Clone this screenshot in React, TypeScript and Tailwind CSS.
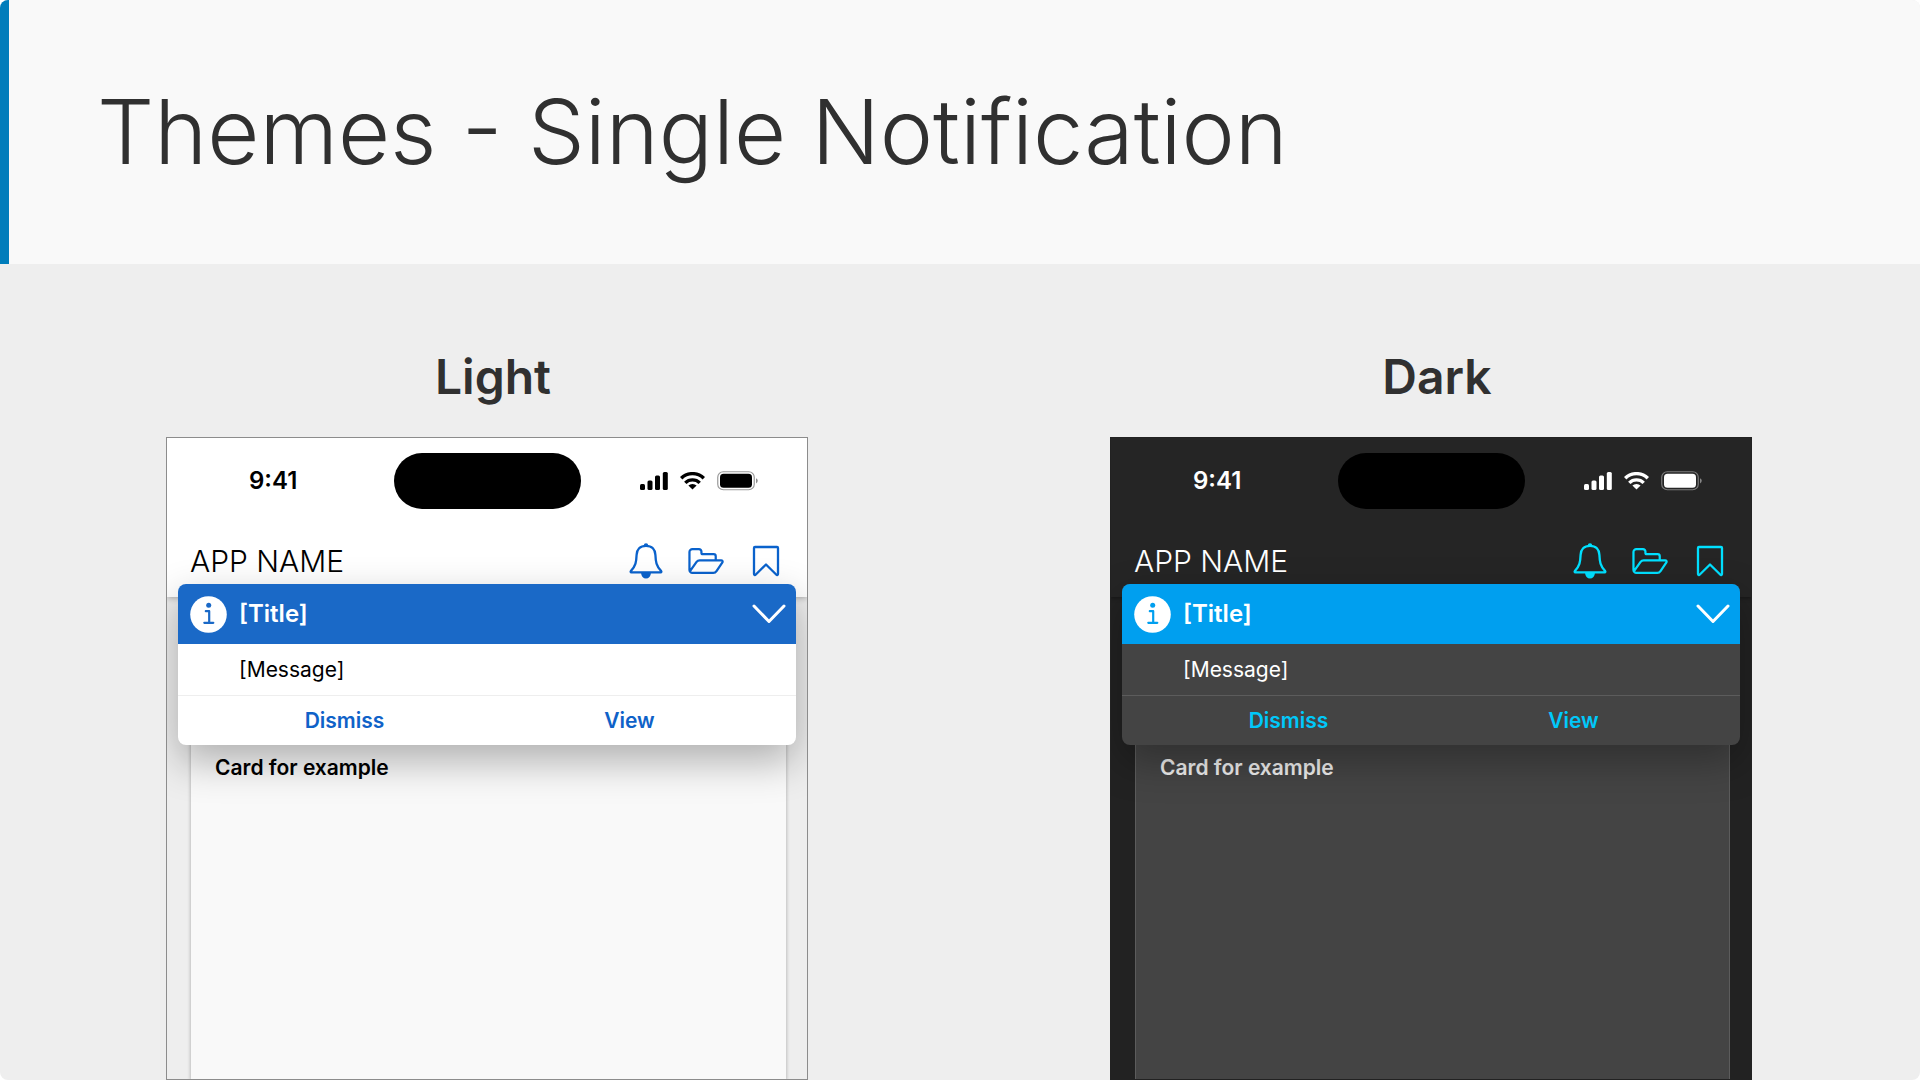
import clsx from 'clsx'

interface IconProps {
  className?: string
}

function SignalIcon({ className }: IconProps) {
  return (
    <svg className={className} viewBox="0 0 28 18" fill="currentColor" aria-hidden="true">
      <rect x="0" y="12" width="5" height="6" rx="1.5" />
      <rect x="7.5" y="8.5" width="5" height="9.5" rx="1.5" />
      <rect x="15" y="3.5" width="5" height="14.5" rx="1.5" />
      <rect x="22.8" y="0" width="5" height="18" rx="1.5" />
    </svg>
  )
}

function WifiIcon({ className }: IconProps) {
  return (
    <svg className={className} viewBox="0 0 25 18" aria-hidden="true">
      <g fill="none" stroke="currentColor" strokeWidth="3.4">
        <path d="M1.2 6.3a16 16 0 0 1 22.6 0" />
        <path d="M5.3 10.9a10.2 10.2 0 0 1 14.4 0" />
      </g>
      <path d="M12.5 17.6 8.4 13.6a5.8 5.8 0 0 1 8.2 0Z" fill="currentColor" />
    </svg>
  )
}

function BatteryIcon({ className }: IconProps) {
  return (
    <svg className={className} viewBox="0 0 42 20" aria-hidden="true">
      <rect x="0.75" y="0.75" width="36.5" height="18" rx="5.5" fill="none" stroke="currentColor" strokeOpacity="0.4" strokeWidth="1.2" />
      <rect x="3" y="2.8" width="32" height="13.9" rx="3.5" fill="currentColor" />
      <path d="M39 7.2v5.2a2.8 2.8 0 0 0 0-5.2Z" fill="currentColor" fillOpacity="0.45" />
    </svg>
  )
}

function BellIcon({ className }: IconProps) {
  return (
    <svg className={className} viewBox="0 0 36 36" fill="none" stroke="currentColor" strokeWidth="2.3" strokeLinejoin="round" aria-hidden="true">
      <path d="M18 2.9c-6 0-9.2 3.7-9.4 9-.3 6.8-.8 11.2-5.8 16.2-.4.5-.2 1.3.5 1.3h29.4c.7 0 .9-.8.5-1.3-5-5-5.5-9.4-5.8-16.200-.2-5.300-3.400-9-9.400-9Z" />
      <path d="M15.800 2.400a2.200 2.200 0 0 1 4.400 0Z" fill="currentColor" stroke="none" />
      <path d="M13.100 30h9.800a4.900 5.600 0 0 1-9.800 0Z" fill="currentColor" stroke="none" />
    </svg>
  )
}

function FolderIcon({ className }: IconProps) {
  return (
    <svg className={className} viewBox="0.5 0 37 36" fill="none" stroke="currentColor" strokeWidth="2.300" strokeLinejoin="round" aria-hidden="true">
      <path d="M29 17.500v-4.300a2.200 2.200 0 0 0-2.200-2.200H15.800a1.500 1.500 0 0 1-1.500-1.500V8.300a2.500 2.500 0 0 0-2.500-2.500H5a3 3 0 0 0-3 3v18.400a3 3 0 0 0 3 3h21.500a4 4 0 0 0 3.300-1.800l5.900-8.700c.8-1.200.2-2.400-1.200-2.400H12.600a4 4 0 0 0-3.300 1.600L2.600 28.500" />
    </svg>
  )
}

function BookmarkIcon({ className }: IconProps) {
  return (
    <svg className={className} viewBox="0 0 36 36" fill="none" stroke="currentColor" strokeWidth="2.300" strokeLinejoin="round" aria-hidden="true">
      <path d="M7 4h22c.6 0 1 .4 1 1v26c0 .9-1 1.300-1.600.7L18 21.500 7.600 31.700c-.6.600-1.600.2-1.600-.7V5c0-.6.400-1 1-1Z" />
    </svg>
  )
}

function InfoIcon({ className }: IconProps) {
  return (
    <svg className={className} viewBox="0 0 37 37" aria-hidden="true">
      <circle cx="18.500" cy="18.500" r="18.300" fill="#fff" />
      <circle cx="18.700" cy="9.300" r="2.500" fill="currentColor" />
      <path d="M15.800 15.200h3.400v11.600m-4.900 0h9" fill="none" stroke="currentColor" strokeWidth="2.200" strokeLinecap="round" strokeLinejoin="round" />
    </svg>
  )
}

function ChevronIcon({ className }: IconProps) {
  return (
    <svg className={className} viewBox="0 0 34 20" fill="none" stroke="currentColor" strokeWidth="3" strokeLinecap="round" strokeLinejoin="round" aria-hidden="true">
      <path d="M2 2l15 15.500L32 2" />
    </svg>
  )
}

interface PhoneProps {
  label: string
  dark?: boolean
}

function Phone({ label, dark = false }: PhoneProps) {
  const action = clsx('flex-1 text-[21px] leading-7 font-semibold', dark ? 'text-[#00c8fa]' : 'text-[#0f62c8]')

  return (
    <section className="flex flex-col">
      <h2 className="pl-3 text-center text-5xl leading-[60px] font-semibold text-[#303030]">{label}</h2>
      <div
        className={clsx(
          'relative mt-[30px] flex flex-1 flex-col overflow-hidden border',
          dark ? 'border-[#222] bg-[#222] text-white' : 'border-[#8c8c8c] bg-[#eee] text-black',
        )}
      >
        <header
          className={clsx(
            'relative pt-[15px] pb-[18px]',
            dark ? 'bg-[#252525] shadow-[0_1px_4px_rgba(0,0,0,0.4)]' : 'bg-white shadow-[0_1px_6px_rgba(0,0,0,0.3)]',
          )}
        >
          <div className="grid grid-cols-[1fr_187px_1fr] items-center">
            <time className="pl-[82px] text-2xl font-semibold">9:41</time>
            <div className="h-14 rounded-full bg-black" />
            <div className="flex items-center gap-3 pl-[59px]">
              <SignalIcon className="h-[18px] w-7" />
              <WifiIcon className="h-[18px] w-[25px]" />
              <BatteryIcon className="h-5 w-[42px]" />
            </div>
          </div>
          <div className="mt-[34px] flex h-9 items-center justify-between px-[23px]">
            <h3 className="text-3xl font-light">APP NAME</h3>
            <nav className={clsx('flex gap-6', dark ? 'text-[#00e0ff]' : 'text-[#0a62cc]')}>
              <button type="button" aria-label="Notifications">
                <BellIcon className="size-9" />
              </button>
              <button type="button" aria-label="Files">
                <FolderIcon className="size-9" />
              </button>
              <button type="button" aria-label="Bookmarks">
                <BookmarkIcon className="size-9" />
              </button>
            </nav>
          </div>
        </header>

        <div
          className={clsx(
            'mr-[21px] ml-6 mt-6 flex-1 px-6 pt-[133px]',
            dark
              ? 'border-x border-[#5c5c5c] bg-[#444] text-[#eee]'
              : 'bg-[#f9f9f9] shadow-[0_0_3px_1px_rgba(0,0,0,0.2)]',
          )}
        >
          <h4 className="text-[21px] leading-7 font-semibold">Card for example</h4>
        </div>

        {/* notification sits over the app header and the card */}
        <div
          role="alert"
          className={clsx(
            'absolute inset-x-[11px] top-[146px] overflow-hidden rounded-lg',
            dark ? 'bg-[#444] shadow-[0_16px_40px_rgba(0,0,0,0.3)]' : 'bg-white shadow-[0_16px_40px_rgba(0,0,0,0.3)]',
          )}
        >
          <div className={clsx('flex h-[60px] items-center pr-[10px] pl-3', dark ? 'bg-[#009fef]' : 'bg-[#1a69c7]')}>
            <InfoIcon className={clsx('size-[37px]', dark ? 'text-[#009fef]' : 'text-[#1a69c7]')} />
            <h4 className="ml-3 text-2xl font-semibold text-white">[Title]</h4>
            <button type="button" aria-label="Collapse" className="ml-auto text-white">
              <ChevronIcon className="h-5 w-[34px]" />
            </button>
          </div>
          <p className="h-[51px] pl-[61px] text-[21px] leading-[51px]">[Message]</p>
          <div className={clsx('flex h-[50px] items-center border-t px-6', dark ? 'border-[#5c5c5c]' : 'border-[#eee]')}>
            <button type="button" className={action}>
              Dismiss
            </button>
            <button type="button" className={action}>
              View
            </button>
          </div>
        </div>
      </div>
    </section>
  )
}

export default function App() {
  return (
    <div className="flex min-h-screen flex-col overflow-hidden rounded-lg bg-[#eee] font-['Inter',sans-serif]">
      <header className="flex h-[264px] items-center border-l-[9px] border-[#007dbb] bg-[#f9f9f9] pl-[88px]">
        <h1 className="text-[90px] leading-none font-light text-[#303030]">Themes - Single Notification</h1>
      </header>
      <main className="grid flex-1 grid-cols-2 gap-[302px] pt-[83px] pr-[168px] pl-[166px]">
        <Phone label="Light" />
        <Phone label="Dark" dark />
      </main>
    </div>
  )
}
